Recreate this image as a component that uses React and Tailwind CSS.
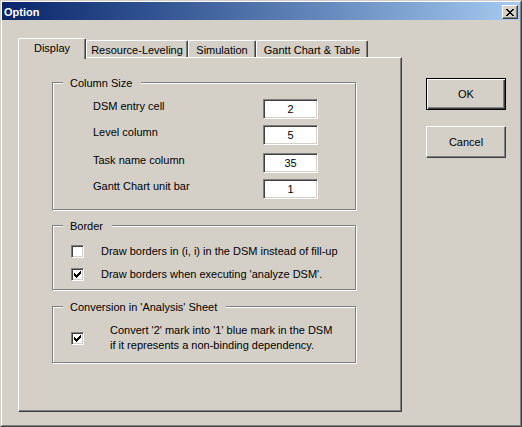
import React from "react";

const face = "bg-[#d4d0c8]";

// classic raised / sunken bevels
const raised =
  "border border-t-white border-l-white border-r-[#404040] border-b-[#404040] shadow-[inset_-1px_-1px_0_#808080]";
const sunken =
  "border border-t-[#808080] border-l-[#808080] border-r-white border-b-white shadow-[inset_1px_1px_0_#404040,inset_-1px_-1px_0_#d4d0c8]";

function CloseGlyph() {
  const rows = ["XX....XX", ".XX..XX.", "..XXXX..", "...XX...", "..XXXX..", ".XX..XX.", "XX....XX"];
  return (
    <svg width="8" height="7" viewBox="0 0 8 7" shapeRendering="crispEdges">
      {rows.map((r, y) =>
        r.split("").map((c, x) => (c === "X" ? <rect key={`${x}-${y}`} x={x} y={y} width="1" height="1" fill="#000" /> : null))
      )}
    </svg>
  );
}

function CheckGlyph() {
  const rows = ["......X", ".....XX", "X...XXX", "XX.XXX.", "XXXXX..", ".XXX...", "..X...."];
  return (
    <svg width="7" height="7" viewBox="0 0 7 7" shapeRendering="crispEdges">
      {rows.map((r, y) =>
        r.split("").map((c, x) => (c === "X" ? <rect key={`${x}-${y}`} x={x} y={y} width="1" height="1" fill="#000" /> : null))
      )}
    </svg>
  );
}

function Checkbox({ checked }) {
  return (
    <span className={`flex h-[13px] w-[13px] shrink-0 items-center justify-center bg-white ${sunken}`}>
      {checked && <CheckGlyph />}
    </span>
  );
}

function Group({ title, className, children }) {
  return (
    <div
      className={`relative w-[304px] border border-[#808080] shadow-[inset_1px_1px_0_#fff,1px_1px_0_#fff] ${className}`}
    >
      <span className={`absolute left-[10px] top-[-7px] pl-[7px] pr-[9px] leading-[14px] ${face}`}>{title}</span>
      {children}
    </div>
  );
}

function Tab({ label, width, selected }) {
  return (
    <div
      className={`${width} ${face} text-center border-t border-l border-r border-t-white border-l-white border-r-[#404040] shadow-[inset_-1px_0_0_#808080] rounded-tl-[2px] rounded-tr-[2px] ${
        selected ? "relative z-10 -mb-[2px] h-[21px] pt-[1px]" : "h-[17px] pt-[1px]"
      }`}
    >
      <span className="leading-[14px]">{label}</span>
    </div>
  );
}

const sizeRows = [
  { label: "DSM entry cell", value: "2", mt: "mt-[16px]" },
  { label: "Level column", value: "5", mt: "mt-[6px]" },
  { label: "Task name column", value: "35", mt: "mt-[8px]" },
  { label: "Gantt Chart unit bar", value: "1", mt: "mt-[6px]" },
];

export default function App() {
  return (
    <div className="w-[522px] h-[427px] font-['Liberation_Sans',Arial,sans-serif] text-[11px] text-black">
      <div className="h-full border border-t-[#d4d0c8] border-l-[#d4d0c8] border-r-[#404040] border-b-[#404040]">
        <div className={`flex h-full flex-col border border-t-white border-l-white border-r-[#808080] border-b-[#808080] ${face}`}>
          {/* title bar */}
          <div className="flex h-[18px] items-start justify-between bg-gradient-to-r from-[#0a246a] to-[#a6caf0] pl-[2px] pr-[2px]">
            <span className="pt-[3px] text-[11px] font-bold leading-[15px] text-white">Option</span>
            <button className={`mt-[3px] flex h-[14px] w-[16px] items-center justify-center ${face} ${raised}`}>
              <CloseGlyph />
            </button>
          </div>

          {/* body */}
          <div className="flex pl-[16px] pt-[18px]">
            <div className="w-[384px]">
              <div className="relative z-10 flex h-[19px] items-end">
                <Tab label="Display" width="w-[68px]" selected />
                <Tab label="Resource-Leveling" width="w-[102px]" />
                <Tab label="Simulation" width="w-[68px]" />
                <Tab label="Gantt Chart & Table" width="w-[112px]" />
              </div>
              <div
                className={`h-[355px] border border-t-white border-l-white border-r-[#404040] border-b-[#404040] shadow-[inset_-1px_-1px_0_#808080] pl-[33px] pt-[24px]`}
              >
                <Group title="Column Size" className="h-[128px]">
                  <div className="flex flex-col pl-[40px] pr-[37px]">
                    {sizeRows.map((r) => (
                      <div key={r.label} className={`flex items-start justify-between ${r.mt}`}>
                        <span className="leading-[14px]">{r.label}</span>
                        <input
                          readOnly
                          value={r.value}
                          className={`h-[20px] w-[55px] bg-white text-center leading-[18px] outline-none ${sunken}`}
                        />
                      </div>
                    ))}
                  </div>
                </Group>

                <Group title="Border" className="mt-[15px] h-[65px]">
                  <div className="flex flex-col gap-[10px] pl-[18px] pt-[19px]">
                    <div className="flex items-center gap-[17px]">
                      <Checkbox />
                      <span className="leading-[13px]">Draw borders in (i, i) in the DSM instead of fill-up</span>
                    </div>
                    <div className="flex items-center gap-[17px]">
                      <Checkbox checked />
                      <span className="leading-[13px]">Draw borders when executing 'analyze DSM'.</span>
                    </div>
                  </div>
                </Group>

                <Group title="Conversion in 'Analysis' Sheet" className="mt-[16px] h-[57px]">
                  <div className="flex items-center gap-[26px] pl-[18px] pt-[16px]">
                    <Checkbox checked />
                    <span className="leading-[15px]">
                      Convert '2' mark into '1' blue mark in the DSM
                      <br />
                      if it represents a non-binding dependency.
                    </span>
                  </div>
                </Group>
              </div>
            </div>

            {/* buttons */}
            <div className="ml-[24px] mt-[40px] flex flex-col gap-[16px]">
              <button
                className={`h-[32px] w-[80px] border border-black ${face} shadow-[inset_1px_1px_0_#fff,inset_-1px_-1px_0_#404040,inset_-2px_-2px_0_#808080]`}
              >
                OK
              </button>
              <button className={`h-[32px] w-[80px] ${face} ${raised}`}>Cancel</button>
            </div>
          </div>
        </div>
      </div>
    </div>
  );
}
